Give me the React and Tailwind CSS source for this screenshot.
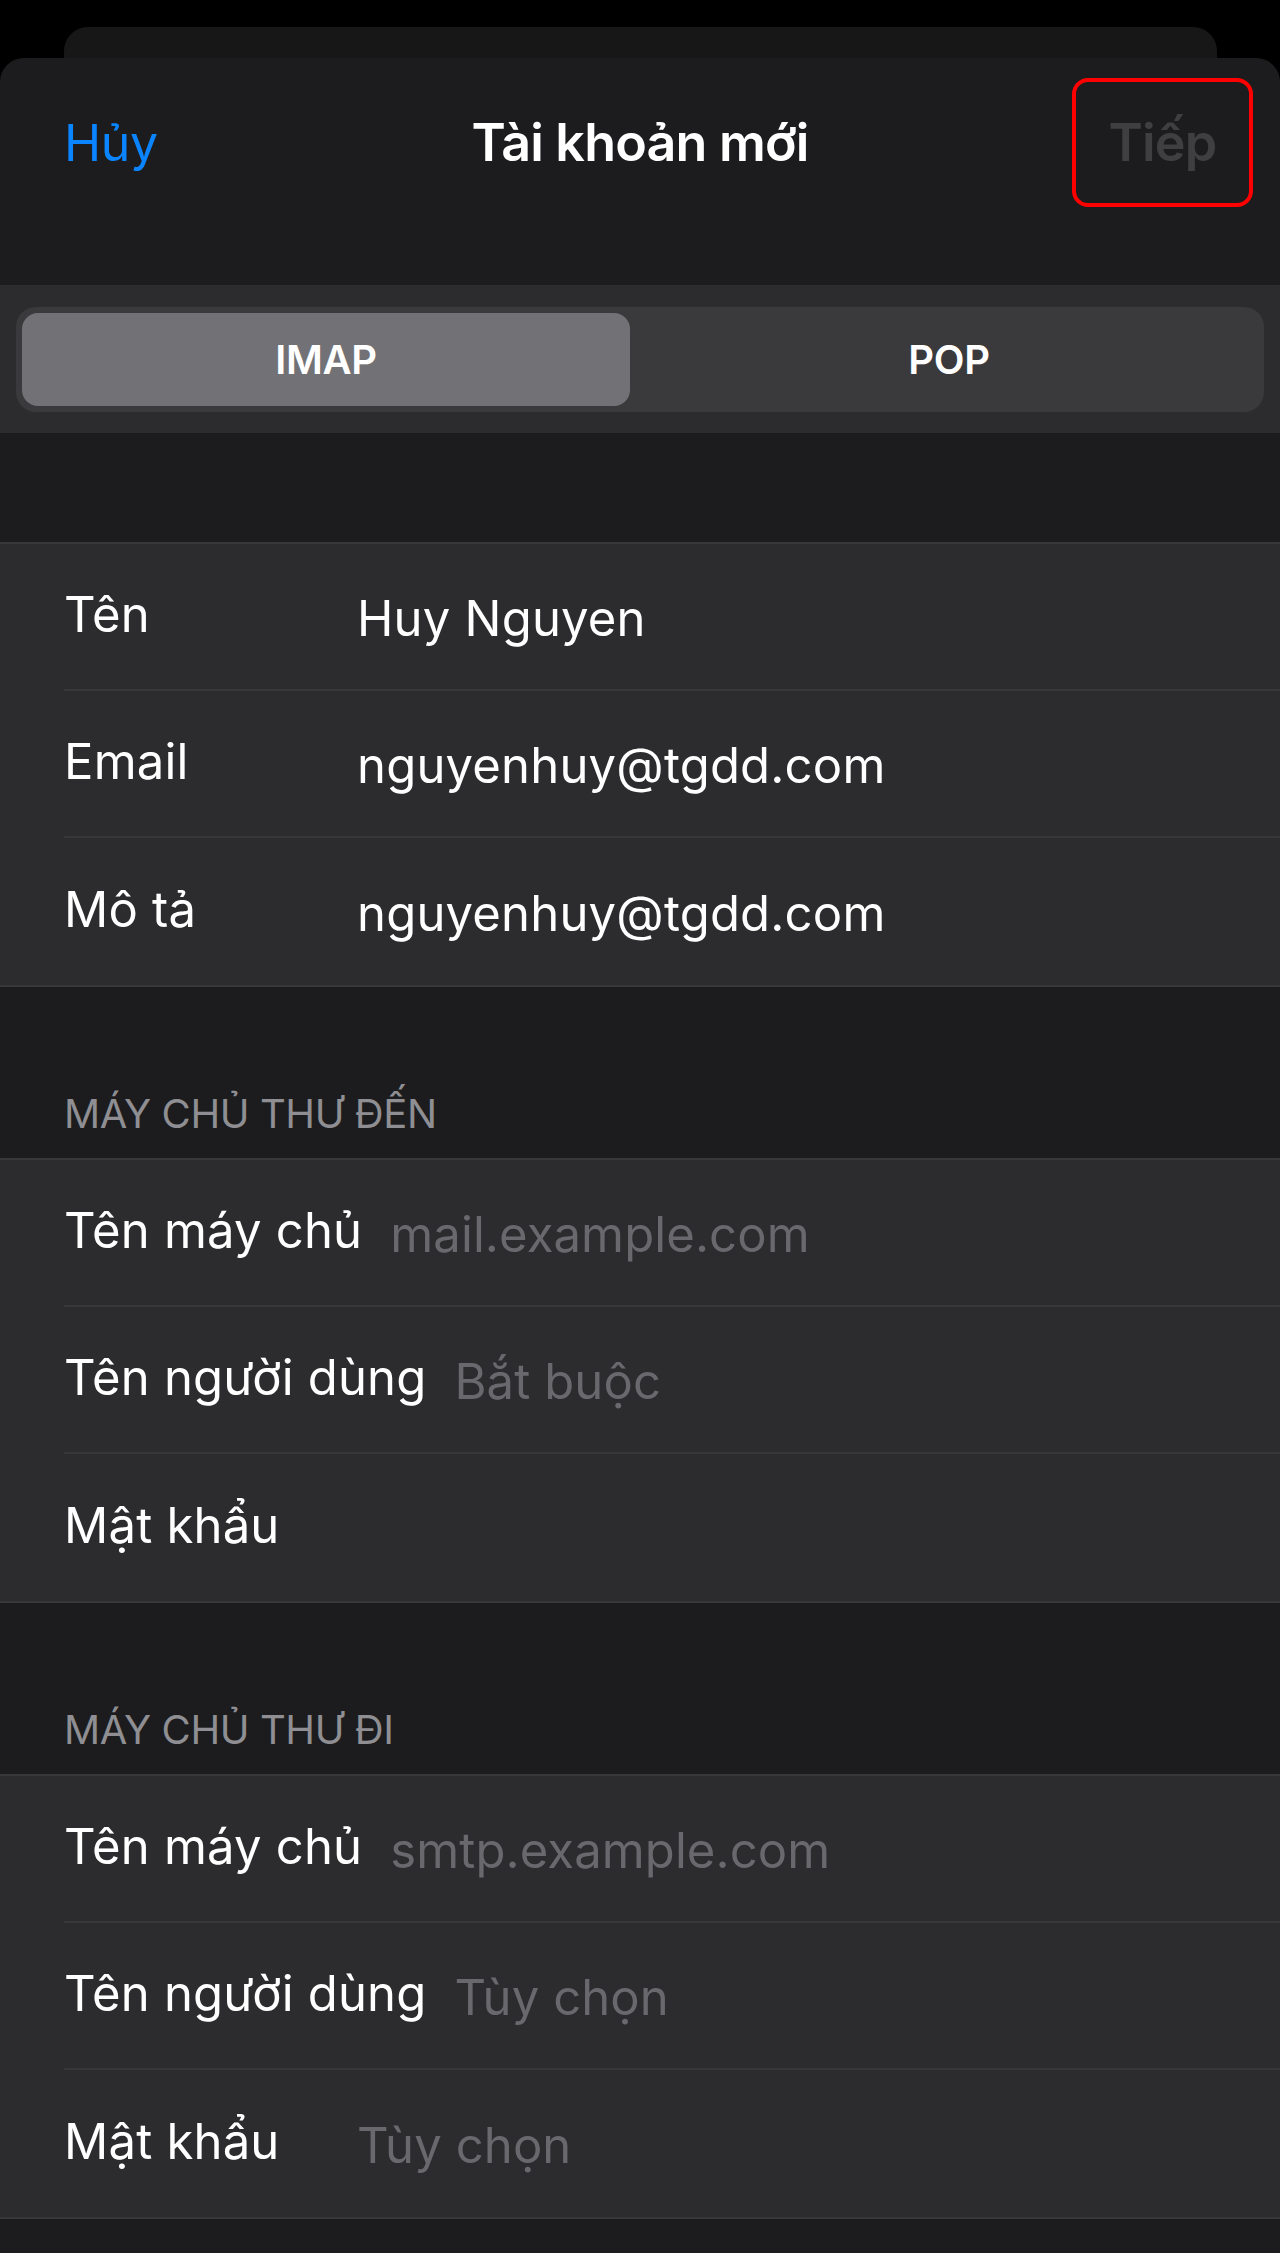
import React from "react";

const Row = ({ label, value, placeholder, last }) => (
  <div className="pl-[64px]">
    <div
      className={
        "flex items-center h-[147px] pr-[32px] " +
        (last ? "" : "border-b-2 border-[#38383b]")
      }
    >
      <div className="min-w-[265px] mr-[28px] text-white text-[49px] tracking-[0.2px] leading-none mb-[4px] whitespace-nowrap">
        {label}
      </div>
      {value ? (
        <div className="text-white text-[49px] tracking-[0.2px] leading-none mt-[4px] whitespace-nowrap">
          {value}
        </div>
      ) : placeholder ? (
        <div className="text-[#68686d] text-[49px] tracking-[0.1px] leading-none mt-[4px] whitespace-nowrap">
          {placeholder}
        </div>
      ) : null}
    </div>
  </div>
);

const Group = ({ rows }) => (
  <div className="bg-[#2c2c2e] border-y-2 border-[#38383b]">
    {rows.map((r, i) => (
      <Row key={i} {...r} last={i === rows.length - 1} />
    ))}
  </div>
);

const SectionHeader = ({ children }) => (
  <div className="h-[171px] flex items-end pl-[64px] pb-[24px]">
    <div className="text-[#8e8e93] text-[40px] leading-none tracking-[-0.4px]">
      {children}
    </div>
  </div>
);

export default function App() {
  return (
    <div
      className="min-h-screen bg-black flex flex-col"
      style={{ fontFamily: "Inter, 'Noto Sans', sans-serif" }}
    >
      <div className="h-[58px] pt-[27px] flex justify-center">
        <div className="w-[1153px] h-[31px] bg-[#171717] rounded-t-[24px]" />
      </div>
      <div className="flex-1 bg-[#1c1c1e] rounded-t-[24px] flex flex-col">
        {/* Header */}
        <div className="h-[227px] pt-[20px]">
          <div className="grid grid-cols-[1fr_auto_1fr] items-center h-[129px]">
            <div className="pl-[64px] text-[#0a84ff] text-[50px] tracking-[-0.4px] leading-none">
              Hủy
            </div>
            <div className="text-white text-[52px] font-semibold tracking-[-0.8px] leading-none">
              Tài khoản mới
            </div>
            <div className="flex justify-end pr-[27px]">
              <div className="w-[181px] h-[129px] border-4 border-[#ff0000] rounded-[16px] flex items-center justify-center">
                <span className="text-[#3f3f42] text-[52px] font-semibold tracking-[-0.8px] leading-none">
                  Tiếp
                </span>
              </div>
            </div>
          </div>
        </div>
        {/* Segmented control */}
        <div className="h-[148px] bg-[#2c2c2e] px-[16px] pt-[22px]">
          <div className="h-[105px] bg-[#3a3a3d] rounded-[20px] p-[6px] grid grid-cols-2">
            <div className="mr-[10px] bg-[#727276] rounded-[16px] flex items-center justify-center text-white text-[40px] font-semibold tracking-[-0.3px]">
              IMAP
            </div>
            <div className="flex items-center justify-center text-white text-[40px] font-semibold tracking-[-0.3px]">
              POP
            </div>
          </div>
        </div>
        <div className="h-[109px]" />
        <Group
          rows={[
            { label: "Tên", value: "Huy Nguyen" },
            { label: "Email", value: "nguyenhuy@tgdd.com" },
            { label: "Mô tả", value: "nguyenhuy@tgdd.com" },
          ]}
        />
        <SectionHeader>MÁY CHỦ THƯ ĐẾN</SectionHeader>
        <Group
          rows={[
            { label: "Tên máy chủ", placeholder: "mail.example.com" },
            { label: "Tên người dùng", placeholder: "Bắt buộc" },
            { label: "Mật khẩu" },
          ]}
        />
        <SectionHeader>MÁY CHỦ THƯ ĐI</SectionHeader>
        <Group
          rows={[
            { label: "Tên máy chủ", placeholder: "smtp.example.com" },
            { label: "Tên người dùng", placeholder: "Tùy chọn" },
            { label: "Mật khẩu", placeholder: "Tùy chọn" },
          ]}
        />
        <div className="flex-1" />
      </div>
    </div>
  );
}
